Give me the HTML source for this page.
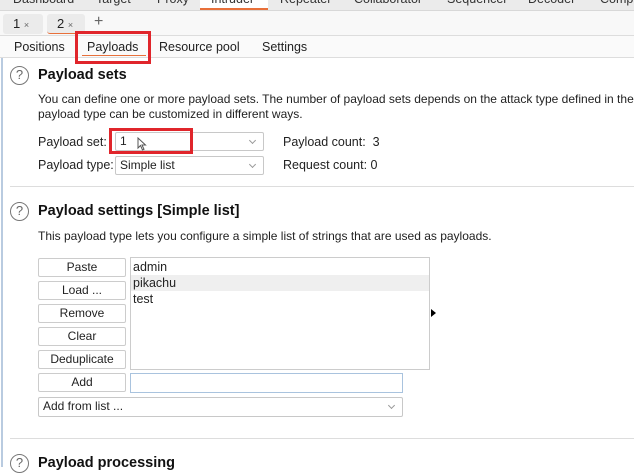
<!DOCTYPE html>
<html><head><meta charset="utf-8"><style>
*{margin:0;padding:0;box-sizing:border-box}
body{width:634px;height:467px;overflow:hidden;background:#fff;font-family:"Liberation Sans",sans-serif;font-size:12px;color:#222;position:relative}
.a{position:absolute;white-space:nowrap}
.btn{position:absolute;left:38px;width:88px;height:19px;border:1px solid #ccc;border-radius:2px;background:#fff;text-align:center;line-height:17px;font-size:12px}
.combo{position:absolute;border:1px solid #c8c8c8;background:#fff;border-radius:2px;height:19px;line-height:17px;padding-left:4px}
.chev{position:absolute;right:8px;top:5px;width:5px;height:5px;border-right:1px solid #999;border-bottom:1px solid #999;transform:rotate(45deg)}
.q{position:absolute;width:19px;height:19px;border:1.5px solid #777;border-radius:50%;text-align:center;line-height:16px;font-size:13px;color:#666}
.h{position:absolute;font-weight:bold;font-size:14.5px;color:#111}
</style></head><body>
<div class="a" style="left:0;top:0;width:634px;height:11px;background:#ebebeb;border-bottom:1px solid #d8d8d8"></div>
<div class="a" style="left:200px;top:0;width:68px;height:10px;background:#fff;border-bottom:2px solid #e8703a"></div>
<div class="a" style="top:-8px;left:13px;font-size:12.5px;color:#333">Dashboard</div>
<div class="a" style="top:-8px;left:96px;font-size:12.5px;color:#333">Target</div>
<div class="a" style="top:-8px;left:157px;font-size:12.5px;color:#333">Proxy</div>
<div class="a" style="top:-8px;left:211px;font-size:12.5px;color:#333">Intruder</div>
<div class="a" style="top:-8px;left:280px;font-size:12.5px;color:#333">Repeater</div>
<div class="a" style="top:-8px;left:354px;font-size:12.5px;color:#333">Collaborator</div>
<div class="a" style="top:-8px;left:447px;font-size:12.5px;color:#333">Sequencer</div>
<div class="a" style="top:-8px;left:528px;font-size:12.5px;color:#333">Decoder</div>
<div class="a" style="top:-8px;left:600px;font-size:12.5px;color:#333">Comp</div>

<div class="a" style="left:0;top:11px;width:634px;height:25px;background:#f8f8f8;border-bottom:1px solid #ddd"></div>
<div class="a" style="left:3px;top:14px;width:40px;height:20px;background:#ebebeb;border-radius:3px"></div>
<div class="a" style="left:13px;top:16px;font-size:13px">1 <span style="font-size:9px;color:#666">×</span></div>
<div class="a" style="left:47px;top:14px;width:38px;height:20px;background:#ebebeb;border-radius:3px;border-bottom:1.5px solid #e8703a"></div>
<div class="a" style="left:57px;top:16px;font-size:13px">2 <span style="font-size:9px;color:#666">×</span></div>
<div class="a" style="left:94px;top:13px;font-size:16px;color:#666">+</div>

<div class="a" style="left:0;top:36px;width:634px;height:22px;background:#fafafa;border-bottom:1px solid #ddd"></div>
<div class="a" style="left:14px;top:40px;font-size:12.5px">Positions</div>
<div class="a" style="left:87px;top:40px;font-size:12.5px">Payloads</div>
<div class="a" style="left:82px;top:55px;width:64px;height:1px;background:#e8703a"></div>
<div class="a" style="left:159px;top:40px;font-size:12.5px">Resource pool</div>
<div class="a" style="left:262px;top:40px;font-size:12.5px">Settings</div>
<div class="a" style="left:75px;top:31px;width:76px;height:33px;border:3px solid #e0252b"></div>
<div class="a" style="left:1px;top:58px;width:2px;height:409px;background:#b9cbe0"></div>

<div class="q" style="left:10px;top:66px">?</div>
<div class="h" style="left:38px;top:67px">Payload sets</div>
<div class="a" style="left:38px;top:92px;font-size:12px;line-height:15px">You can define one or more payload sets. The number of payload sets depends on the attack type defined in the<br>payload type can be customized in different ways.</div>

<div class="a" style="left:38px;top:135px;font-size:12.5px">Payload set:</div>
<div class="combo" style="left:115px;top:132px;width:149px">1<span class="chev"></span></div>
<svg class="a" style="left:137px;top:137px" width="10" height="14" viewBox="0 0 10 14"><path d="M1 1 L1 11 L3.5 8.5 L5.5 13 L7 12.3 L5 8 L8.5 8 Z" fill="#fff" stroke="#555" stroke-width="1"/></svg>
<div class="a" style="left:109px;top:128px;width:84px;height:26px;border:3px solid #e0252b"></div>
<div class="a" style="left:283px;top:135px;font-size:12.5px">Payload count:&nbsp; 3</div>
<div class="a" style="left:38px;top:158px;font-size:12.5px">Payload type:</div>
<div class="combo" style="left:115px;top:156px;width:149px">Simple list<span class="chev"></span></div>
<div class="a" style="left:283px;top:158px;font-size:12.5px">Request count: 0</div>
<div class="a" style="left:10px;top:186px;width:624px;height:1px;background:#ddd"></div>

<div class="q" style="left:10px;top:202px">?</div>
<div class="h" style="left:38px;top:203px">Payload settings [Simple list]</div>
<div class="a" style="left:38px;top:229px;font-size:12px">This payload type lets you configure a simple list of strings that are used as payloads.</div>

<div class="btn" style="top:258px">Paste</div>
<div class="btn" style="top:281px">Load ...</div>
<div class="btn" style="top:304px">Remove</div>
<div class="btn" style="top:327px">Clear</div>
<div class="btn" style="top:350px">Deduplicate</div>
<div class="btn" style="top:373px">Add</div>
<div class="a" style="left:130px;top:257px;width:300px;height:113px;border:1px solid #ccc"></div>
<div class="a" style="left:131px;top:275px;width:298px;height:16px;background:#efefef"></div>
<div class="a" style="left:133px;top:260px;font-size:12.5px">admin</div>
<div class="a" style="left:133px;top:276px;font-size:12.5px">pikachu</div>
<div class="a" style="left:133px;top:292px;font-size:12.5px">test</div>
<div class="a" style="left:431px;top:309px;width:0;height:0;border-left:5px solid #000;border-top:4px solid transparent;border-bottom:4px solid transparent"></div>
<div class="a" style="left:130px;top:373px;width:273px;height:20px;border:1px solid #a9c3de"></div>
<div class="combo" style="left:38px;top:397px;width:365px;height:20px">Add from list ...<span class="chev"></span></div>
<div class="a" style="left:10px;top:438px;width:624px;height:1px;background:#ddd"></div>
<div class="q" style="left:10px;top:454px">?</div>
<div class="h" style="left:38px;top:455px">Payload processing</div>
</body></html>
